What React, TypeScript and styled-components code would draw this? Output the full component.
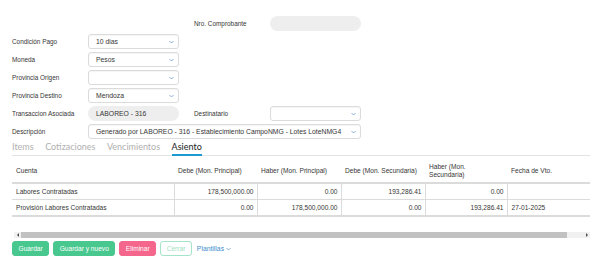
import styled, { createGlobalStyle } from "styled-components";

const GlobalStyle = createGlobalStyle`
  body {
    margin: 0;
    background: #ffffff;
    font-family: "Liberation Sans", Arial, sans-serif;
    color: #363636;
  }
`;

const Page = styled.div`
  width: 602px;
  box-sizing: border-box;
  padding: 16px 12px 0 12px;
`;

const Form = styled.div`
  display: flex;
  flex-direction: column;
  gap: 3px;
`;

const Row = styled.div`
  display: flex;
  align-items: center;
  height: 15px;
`;

const Spacer = styled.div<{ $w: number }>`
  flex: 0 0 ${(p) => p.$w}px;
`;

const Label = styled.label`
  flex: 0 0 76px;
  font-size: 6.4px;
  color: #363636;
  white-space: nowrap;
`;

const Select = styled.div<{ $w?: number }>`
  flex: 0 0 ${(p) => p.$w ?? 91}px;
  height: 15px;
  box-sizing: border-box;
  border: 1px solid #dbdbdb;
  border-radius: 3px;
  box-shadow: inset 0 1px 1px rgba(10, 10, 10, 0.04);
  display: flex;
  align-items: center;
  justify-content: space-between;
  padding: 0 4px 0 7px;
  font-size: 6.8px;
  color: #363636;
  white-space: nowrap;
`;

const Pill = styled.div`
  flex: 0 0 91px;
  height: 15px;
  box-sizing: border-box;
  border-radius: 8px;
  background: #eeeeee;
  display: flex;
  align-items: center;
  padding-left: 8px;
  font-size: 6.8px;
  color: #363636;
`;

const Chevron = () => (
  <svg width="5" height="4" viewBox="0 0 5 4">
    <polyline points="0.5,1 2.5,3 4.5,1" fill="none" stroke="#7ea6d8" strokeWidth="0.9" />
  </svg>
);

const TabBar = styled.div`
  display: flex;
  gap: 11.5px;
  margin-top: 2px;
  border-bottom: 1px solid #e3e3e3;
`;

const Tab = styled.div<{ $active?: boolean }>`
  font-family: Lato, "Open Sans", sans-serif;
  font-size: 9px;
  line-height: 12px;
  padding-bottom: 1px;
  color: ${(p) => (p.$active ? "#222222" : "#b0b0b0")};
  border-bottom: 2px solid ${(p) => (p.$active ? "#1c9ad2" : "transparent")};
  margin-bottom: -1px;
`;

const Table = styled.table`
  width: 100%;
  margin-top: 4px;
  border-collapse: collapse;
  table-layout: fixed;
  font-size: 6.6px;
  color: #363636;
`;

const Th = styled.th`
  text-align: left;
  font-weight: normal;
  padding: 2px 4px;
  line-height: 8px;
  height: 18px;
  vertical-align: middle;
  border-bottom: 2px solid #dbdbdb;
`;

const Td = styled.td<{ $num?: boolean }>`
  text-align: ${(p) => (p.$num ? "right" : "left")};
  padding: 3px ${(p) => (p.$num ? "3px" : "4px")} 3px 4px;
  line-height: 9px;
  white-space: nowrap;
  border-bottom: 1px solid #dbdbdb;
  & + & {
    border-left: 1px solid #dbdbdb;
  }
`;

const BodyRow = styled.tr`
  &:last-child td {
    border-bottom: 2px solid #dbdbdb;
  }
`;

const Scrollbar = styled.div`
  display: flex;
  align-items: center;
  height: 6px;
  margin: 15px 0 0 2px;
  background: #f1f1f1;
`;

const Thumb = styled.div`
  flex: 0 0 546px;
  height: 6px;
  background: #c1c1c1;
`;

const ScrollArrow = styled.div<{ $dir: "left" | "right" }>`
  flex: 0 0 7px;
  display: flex;
  justify-content: center;
  &::before {
    content: "";
    border-top: 2px solid transparent;
    border-bottom: 2px solid transparent;
    ${(p) =>
      p.$dir === "left"
        ? "border-right: 2px solid #505050;"
        : "border-left: 2px solid #505050;"}
  }
`;

const Fill = styled.div`
  flex: 1;
`;

const Actions = styled.div`
  display: flex;
  align-items: center;
  gap: 4px;
  margin-top: 3px;
`;

const Button = styled.button<{ $variant: "success" | "danger" | "outline" }>`
  height: 15px;
  box-sizing: border-box;
  padding: 0 5.5px;
  border-radius: 3px;
  font-family: "Liberation Sans", Arial, sans-serif;
  font-size: 6.6px;
  cursor: pointer;
  border: 1px solid
    ${(p) =>
      p.$variant === "success" ? "#48c78e" : p.$variant === "danger" ? "#f4668b" : "#a6e3c8"};
  background: ${(p) =>
    p.$variant === "success" ? "#48c78e" : p.$variant === "danger" ? "#f4668b" : "#ffffff"};
  color: ${(p) => (p.$variant === "outline" ? "#9edfc2" : "#ffffff")};
`;

const LinkButton = styled.button`
  border: none;
  background: none;
  padding: 0 0 0 1px;
  display: flex;
  align-items: center;
  gap: 2px;
  font-family: "Liberation Sans", Arial, sans-serif;
  font-size: 6.8px;
  color: #3e8ed0;
  cursor: pointer;
`;

const rows = [
  {
    cuenta: "Labores Contratadas",
    debeP: "178,500,000.00",
    haberP: "0.00",
    debeS: "193,286.41",
    haberS: "0.00",
    fecha: "",
  },
  {
    cuenta: "Provisión Labores Contratadas",
    debeP: "0.00",
    haberP: "178,500,000.00",
    debeS: "0.00",
    haberS: "193,286.41",
    fecha: "27-01-2025",
  },
];

export default function App() {
  return (
    <>
      <GlobalStyle />
      <Page>
        <Form>
          <Row>
            <Spacer $w={182} />
            <Label>Nro. Comprobante</Label>
            <Pill />
          </Row>
          <Row>
            <Label>Condición Pago</Label>
            <Select>
              10 dias <Chevron />
            </Select>
          </Row>
          <Row>
            <Label>Moneda</Label>
            <Select>
              Pesos <Chevron />
            </Select>
          </Row>
          <Row>
            <Label>Provincia Origen</Label>
            <Select>
              <span /> <Chevron />
            </Select>
          </Row>
          <Row>
            <Label>Provincia Destino</Label>
            <Select>
              Mendoza <Chevron />
            </Select>
          </Row>
          <Row>
            <Label>Transaccion Asociada</Label>
            <Pill>LABOREO - 316</Pill>
            <Spacer $w={15} />
            <Label>Destinatario</Label>
            <Select>
              <span /> <Chevron />
            </Select>
          </Row>
          <Row>
            <Label>Descripción</Label>
            <Select $w={273}>
              Generado por LABOREO - 316 - Establecimiento CampoNMG - Lotes LoteNMG4 <Chevron />
            </Select>
          </Row>
        </Form>

        <TabBar>
          <Tab>Items</Tab>
          <Tab>Cotizaciones</Tab>
          <Tab>Vencimientos</Tab>
          <Tab $active>Asiento</Tab>
        </TabBar>

        <Table>
          <colgroup>
            <col style={{ width: 162 }} />
            <col style={{ width: 83 }} />
            <col style={{ width: 84 }} />
            <col style={{ width: 84 }} />
            <col style={{ width: 82 }} />
            <col />
          </colgroup>
          <thead>
            <tr>
              <Th>Cuenta</Th>
              <Th>Debe (Mon. Principal)</Th>
              <Th>Haber (Mon. Principal)</Th>
              <Th>Debe (Mon. Secundaria)</Th>
              <Th>Haber (Mon. Secundaria)</Th>
              <Th>Fecha de Vto.</Th>
            </tr>
          </thead>
          <tbody>
            {rows.map((r) => (
              <BodyRow key={r.cuenta}>
                <Td>{r.cuenta}</Td>
                <Td $num>{r.debeP}</Td>
                <Td $num>{r.haberP}</Td>
                <Td $num>{r.debeS}</Td>
                <Td $num>{r.haberS}</Td>
                <Td>{r.fecha}</Td>
              </BodyRow>
            ))}
          </tbody>
        </Table>

        <Scrollbar>
          <ScrollArrow $dir="left" />
          <Thumb />
          <Fill />
          <ScrollArrow $dir="right" />
        </Scrollbar>

        <Actions>
          <Button $variant="success">Guardar</Button>
          <Button $variant="success">Guardar y nuevo</Button>
          <Button $variant="danger">Eliminar</Button>
          <Button $variant="outline">Cerrar</Button>
          <LinkButton>
            Plantillas <Chevron />
          </LinkButton>
        </Actions>
      </Page>
    </>
  );
}
